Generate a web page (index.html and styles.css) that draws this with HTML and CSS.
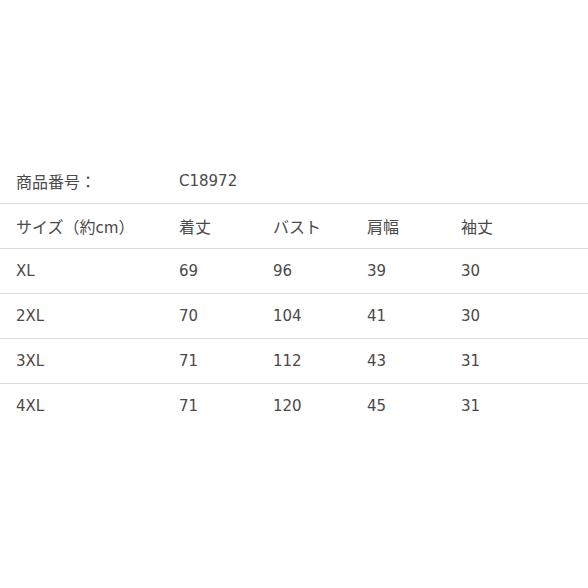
FILE: index.html
```html
<!DOCTYPE html>
<html lang="ja">
<head>
<meta charset="utf-8">
<link rel="stylesheet" href="styles.css">
</head>
<body>
<div class="sheet">
  <div class="row">
    <div class="cell ja">商品番号：</div>
    <div class="cell">C18972</div>
  </div>
  <div class="row">
    <div class="cell ja">サイズ（約cm）</div>
    <div class="cell ja">着丈</div>
    <div class="cell ja">バスト</div>
    <div class="cell ja">肩幅</div>
    <div class="cell ja">袖丈</div>
  </div>
  <div class="row">
    <div class="cell">XL</div>
    <div class="cell">69</div>
    <div class="cell">96</div>
    <div class="cell">39</div>
    <div class="cell">30</div>
  </div>
  <div class="row">
    <div class="cell">2XL</div>
    <div class="cell">70</div>
    <div class="cell">104</div>
    <div class="cell">41</div>
    <div class="cell">30</div>
  </div>
  <div class="row">
    <div class="cell">3XL</div>
    <div class="cell">71</div>
    <div class="cell">112</div>
    <div class="cell">43</div>
    <div class="cell">31</div>
  </div>
  <div class="row last">
    <div class="cell">4XL</div>
    <div class="cell">71</div>
    <div class="cell">120</div>
    <div class="cell">45</div>
    <div class="cell">31</div>
  </div>
</div>
</body>
</html>
```
FILE: styles.css
```css
html, body {
  margin: 0;
  padding: 0;
  background: #fff;
}
body {
  font-family: "DejaVu Sans", "Noto Sans CJK JP", sans-serif;
  font-size: 15px;
  color: #4a4a4a;
}
.sheet {
  padding-top: 159px;
}
.row {
  display: grid;
  grid-template-columns: 163px 94px 94px 94px 1fr;
  padding-left: 16px;
  height: 44px;
  align-items: center;
  border-bottom: 1px solid #dcdcdc;
}
.row.last {
  border-bottom: none;
}
.cell {
  white-space: nowrap;
  line-height: 1;
}
.cell.ja {
  font-family: "Noto Sans CJK JP", sans-serif;
  font-size: 16px;
}
```
